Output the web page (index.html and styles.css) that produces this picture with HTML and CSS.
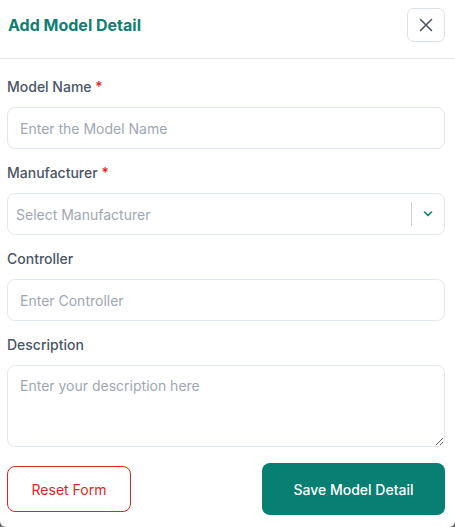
FILE: index.html
```html
<!DOCTYPE html>
<html lang="en">
<head>
<meta charset="utf-8">
<title>Add Model Detail</title>
<link rel="stylesheet" href="styles.css">
</head>
<body>
<div class="modal">
  <header class="modal-header">
    <h2 class="title">Add Model Detail</h2>
    <button class="close" type="button" aria-label="Close">
      <svg width="14" height="14" viewBox="0 0 14 14"><path d="M1.5 1.5L12.5 12.5M12.5 1.5L1.5 12.5" stroke="#4b5563" stroke-width="1.6" stroke-linecap="round"/></svg>
    </button>
  </header>
  <form class="form">
    <div class="field">
      <label class="label">Model Name <span class="req">*</span></label>
      <input class="input" type="text" placeholder="Enter the Model Name">
    </div>
    <div class="field">
      <label class="label">Manufacturer <span class="req">*</span></label>
      <div class="select">
        <span class="select-text">Select Manufacturer</span>
        <span class="sep"></span>
        <span class="chev">
          <svg width="10" height="6" viewBox="0 0 10 6"><path d="M1.5 1L5 4.5L8.5 1" fill="none" stroke="#0f7f72" stroke-width="1.6" stroke-linecap="round" stroke-linejoin="round"/></svg>
        </span>
      </div>
    </div>
    <div class="field">
      <label class="label">Controller</label>
      <input class="input" type="text" placeholder="Enter Controller">
    </div>
    <div class="field">
      <label class="label">Description</label>
      <textarea class="input textarea" placeholder="Enter your description here"></textarea>
    </div>
    <div class="footer">
      <button class="btn btn-reset" type="button">Reset Form</button>
      <button class="btn btn-save" type="button">Save Model Detail</button>
    </div>
  </form>
</div>
</body>
</html>
```
FILE: styles.css
```css
html {
  background: #6b6b6b;
  height: 100%;
}
body {
  margin: 0;
  min-height: 100%;
  background: #ffffff;
  border-radius: 0 0 6px 6px;
  font-family: Inter, "Liberation Sans", sans-serif;
  color: #475569;
}
.modal {
  display: flex;
  flex-direction: column;
}
.modal-header {
  display: flex;
  align-items: center;
  justify-content: space-between;
  padding: 8px 10px 16px 8px;
  border-bottom: 1px solid #e5e7eb;
}
.title {
  margin: 0;
  font-size: 16px;
  font-weight: 700;
  color: #0f7f72;
  line-height: 20px;
}
.close {
  width: 38px;
  height: 34px;
  display: flex;
  align-items: center;
  justify-content: center;
  background: #fff;
  border: 1px solid #dbe1ea;
  border-radius: 7px;
  padding: 0;
}
.form {
  display: flex;
  flex-direction: column;
  gap: 14px;
  padding: 18px 10px 0 7px;
}
.field {
  display: flex;
  flex-direction: column;
  gap: 10px;
}
.label {
  font-size: 14px;
  font-weight: 500;
  line-height: 20px;
  color: #4b5568;
}
.req {
  color: #dc2626;
}
.input {
  box-sizing: border-box;
  height: 42px;
  width: 100%;
  border: 1px solid #e2e8f0;
  border-radius: 8px;
  padding: 0 12px;
  font-family: Inter, "Liberation Sans", sans-serif;
  font-size: 14px;
  color: #334155;
  background: #fff;
  outline: none;
}
.input::placeholder {
  color: #a0a7b4;
}
.textarea {
  height: 82px;
  padding: 10px 12px;
  resize: vertical;
  line-height: 20px;
}
.select {
  box-sizing: border-box;
  height: 42px;
  display: flex;
  align-items: center;
  border: 1px solid #e2e8f0;
  border-radius: 8px;
  padding-left: 8px;
}
.select-text {
  flex: 1;
  font-size: 14px;
  color: #a0a7b4;
}
.sep {
  width: 1px;
  height: 24px;
  background: #d1d5db;
}
.chev {
  width: 32px;
  display: flex;
  justify-content: center;
  align-items: center;
}
.footer {
  display: flex;
  justify-content: space-between;
  align-items: center;
  margin-top: 2px;
}
.btn {
  font-family: Inter, "Liberation Sans", sans-serif;
  font-size: 14px;
  font-weight: 500;
  border-radius: 8px;
  cursor: pointer;
}
.btn-reset {
  width: 124px;
  height: 46px;
  background: #fff;
  color: #dc2626;
  border: 1px solid #dc2626;
  font-weight: 400;
}
.btn-save {
  width: 183px;
  height: 52px;
  background: #077f72;
  color: #fff;
  border: none;
}
```
